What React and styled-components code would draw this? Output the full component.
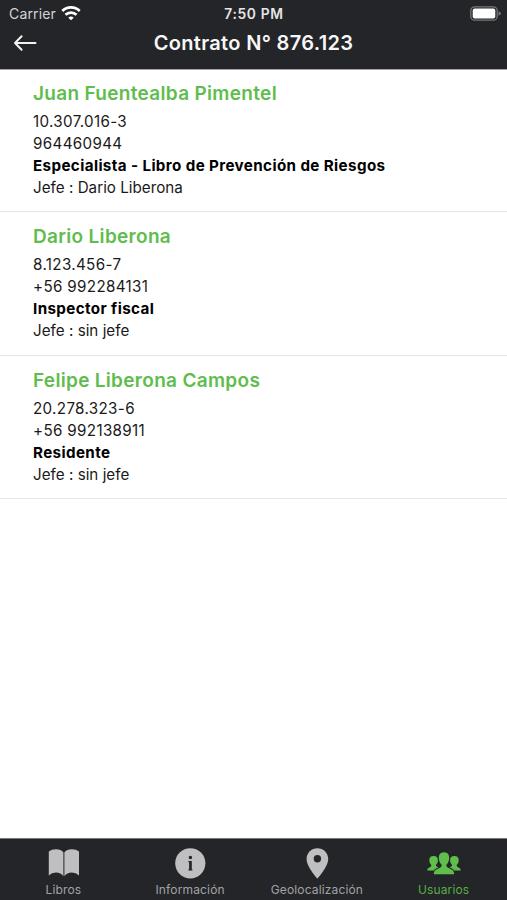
import React from 'react';
import styled, { createGlobalStyle } from 'styled-components';

const Global = createGlobalStyle`
  * { box-sizing: border-box; }
  body { margin: 0; background: #fff; font-family: Inter, "Liberation Sans", sans-serif; }
`;
const Screen = styled.div`
  display: flex; flex-direction: column; height: 900px; width: 507px; overflow: hidden; background: #fff;
`;
const Header = styled.header`height: 70px; background: #242529; color: #f7f7f7; border-bottom: 1px solid #a5a5a8;`;
const StatusBar = styled.div`
  height: 27px; display: grid; grid-template-columns: 1fr auto 1fr; align-items: center;
  padding: 0 6px 0 9px; font-size: 14px;
`;
const Carrier = styled.div`
  display: flex; align-items: center; gap: 5px; color: #d4d4d6; letter-spacing: 0.15px;
  svg { margin-bottom: 2px; }
`;
const Clock = styled.div`font-weight: 600; font-size: 13.8px; letter-spacing: 0.65px; color: #e6e6e6; margin-left: -2px;`;
const Icon = styled.svg`display: block; flex: none;`;
const Battery = styled(Icon)`justify-self: end; margin-bottom: 1px;`;
const NavBar = styled.div`
  height: 32px; display: grid; grid-template-columns: 50px 1fr 50px; align-items: center;
`;
const Back = styled(Icon)`margin-left: 13px;`;
const Title = styled.h1`
  margin: 0; font-size: 20px; font-weight: 600; letter-spacing: 0.33px; text-align: center; white-space: nowrap;
`;
const List = styled.main`flex: 1; margin-top: -1px;`;
const Card = styled.section`
  height: 143.4px; padding: 13px 33px 0; border-bottom: 1px solid #e6e6e6;
`;
const Name = styled.h2`
  margin: 0 0 5px; font-size: 19px; line-height: 24px; font-weight: 600; letter-spacing: 0.31px; color: #60bd4d;
`;
const Line = styled.div`
  font-size: 15.2px; line-height: 22px; color: #1a1a1a; letter-spacing: 0.02px; white-space: nowrap;
`;
const NumberLine = styled(Line)`letter-spacing: 0.33px;`;
const RoleLine = styled(Line)`font-weight: 700; letter-spacing: 0.38px; color: #000;`;
const Tabs = styled.nav`
  height: 62px; background: #242529; border-top: 1px solid #77777a; display: grid; grid-template-columns: repeat(4, 1fr);
`;
const Tab = styled.div`
  display: flex; flex-direction: column; align-items: center; padding-top: 8px; gap: 3px;
  color: ${p => (p.$active ? '#55b043' : '#a2a2a5')};
  font-size: 12px; line-height: 16px; letter-spacing: 0.15px;
  svg { color: ${p => (p.$active ? '#5fbf4a' : '#bfbfc1')}; }
`;

const WifiIcon = () => (
  <Icon width="20" height="16" viewBox="0 0 20 16" fill="none" stroke="#fff" strokeWidth="2.7">
    <path d="M1.3 6 A12.4 12.4 0 0 1 18.7 6" />
    <path d="M4.5 9.8 A7.8 7.8 0 0 1 15.5 9.8" />
    <path d="M10 15.3 L7.3 12.7 A4.2 4.2 0 0 1 12.7 12.7 Z" fill="#fff" stroke="none" />
  </Icon>
);
const BatteryIcon = () => (
  <Battery width="31" height="15" viewBox="0 0 31 15">
    <rect x="0.8" y="0.8" width="26.4" height="13.4" rx="3.8" fill="none" stroke="#77777a" strokeWidth="1.3" />
    <rect x="2.7" y="2.6" width="22.6" height="9.8" rx="2" fill="#fff" />
    <path d="M28.5 5.2 Q31 6 31 7.5 Q31 9 28.5 9.8 Z" fill="#77777a" />
  </Battery>
);
const BackIcon = () => (
  <Back width="24" height="18" viewBox="0 0 24 18" fill="none" stroke="#f2f2f2" strokeWidth="2" strokeLinecap="round" strokeLinejoin="round">
    <path d="M22.5 9 H2 M8.6 2.3 L2 9 L8.6 15.7" />
  </Back>
);
const BookIcon = () => (
  <Icon width="32" height="32" viewBox="0 0 32 32" fill="currentColor">
    <path d="M1.8 4.6 Q4.5 2.2 9 2.2 Q14 2.2 16.4 5.2 V29.3 Q13.8 25.6 9 25.6 Q4.6 25.6 1.8 28.4 Z" />
    <path d="M32 4.6 Q29.3 2.2 24.8 2.2 Q19.8 2.2 17.4 5.2 V29.3 Q20 25.6 24.8 25.6 Q29.2 25.6 32 28.4 Z" />
  </Icon>
);
const InfoIcon = () => (
  <Icon width="32" height="32" viewBox="0 0 32 32" fill="currentColor">
    <circle cx="16.3" cy="16.3" r="15.1" />
    <g fill="#242529">
      <circle cx="16.4" cy="10.5" r="1.7" />
      <path d="M14.4 14 H17.8 V22.2 H18.4 V23.4 H14.4 V22.2 H15.1 V15.2 H14.4 Z" />
    </g>
  </Icon>
);
const PinIcon = () => (
  <Icon width="32" height="32" viewBox="0 0 32 32" fill="currentColor">
    <path fillRule="evenodd" d="M16.4 1.3 C10.4 1.3 5.6 6 5.6 12 C5.6 20 16.4 31.7 16.4 31.7 S27.2 20 27.2 12 C27.2 6 22.4 1.3 16.4 1.3 Z M16.4 8 a3.7 3.7 0 1 1 0 7.4 a3.7 3.7 0 1 1 0 -7.4 Z" />
  </Icon>
);

const sidePerson = 'M6.6 9 C3.5 9 2 10.9 2.3 13.6 C2.4 15.7 3.2 16.9 4.3 18 C4.4 19 4 19.7 3 20.2 C1.3 21 .3 21.5 .2 23.5 H7 C8 21.6 10 21 11.6 20.2 C10 19.8 8.8 19.3 8.9 18 C10 16.9 10.8 15.7 10.9 13.6 C11.2 10.9 9.7 9 6.6 9 Z';

const UsersIcon = () => (
  <Icon width="34" height="32" viewBox="0 0 34 32" fill="currentColor">
    <path d="M17 5.2 C13.2 5.2 11.6 8 11.8 11.3 C12 14.4 13.1 16.2 14.5 17.6 C14.9 19 14.5 20 13 20.8 C10.2 22.2 7 22.5 6.8 27.2 H27.2 C27 22.5 23.8 22.2 21 20.8 C19.5 20 19.1 19 19.5 17.6 C20.9 16.2 22 14.4 22.2 11.3 C22.4 8 20.8 5.2 17 5.2 Z" />
    <path d={sidePerson} />
    <path transform="matrix(-1 0 0 1 34 0)" d={sidePerson} />
  </Icon>
);

const users = [
  { name: 'Juan Fuentealba Pimentel', id: '10.307.016-3', phone: '964460944', role: 'Especialista - Libro de Prevención de Riesgos', boss: 'Dario Liberona' },
  { name: 'Dario Liberona', id: '8.123.456-7', phone: '+56 992284131', role: 'Inspector fiscal', boss: 'sin jefe' },
  { name: 'Felipe Liberona Campos', id: '20.278.323-6', phone: '+56 992138911', role: 'Residente', boss: 'sin jefe' },
];
const tabs = [
  { label: 'Libros', Glyph: BookIcon },
  { label: 'Información', Glyph: InfoIcon },
  { label: 'Geolocalización', Glyph: PinIcon },
  { label: 'Usuarios', Glyph: UsersIcon, active: true },
];

export default function App() {
  return (
    <Screen>
      <Global />
      <Header>
        <StatusBar>
          <Carrier>Carrier <WifiIcon /></Carrier>
          <Clock>7:50 PM</Clock>
          <BatteryIcon />
        </StatusBar>
        <NavBar><BackIcon /><Title>Contrato N° 876.123</Title></NavBar>
      </Header>
      <List>
        {users.map(u => (
          <Card key={u.name}>
            <Name>{u.name}</Name>
            <NumberLine>{u.id}</NumberLine>
            <NumberLine>{u.phone}</NumberLine>
            <RoleLine>{u.role}</RoleLine>
            <Line>Jefe : {u.boss}</Line>
          </Card>
        ))}
      </List>
      <Tabs>
        {tabs.map(({ label, Glyph, active }) => (
          <Tab key={label} $active={active}><Glyph /><span>{label}</span></Tab>
        ))}
      </Tabs>
    </Screen>
  );
}
